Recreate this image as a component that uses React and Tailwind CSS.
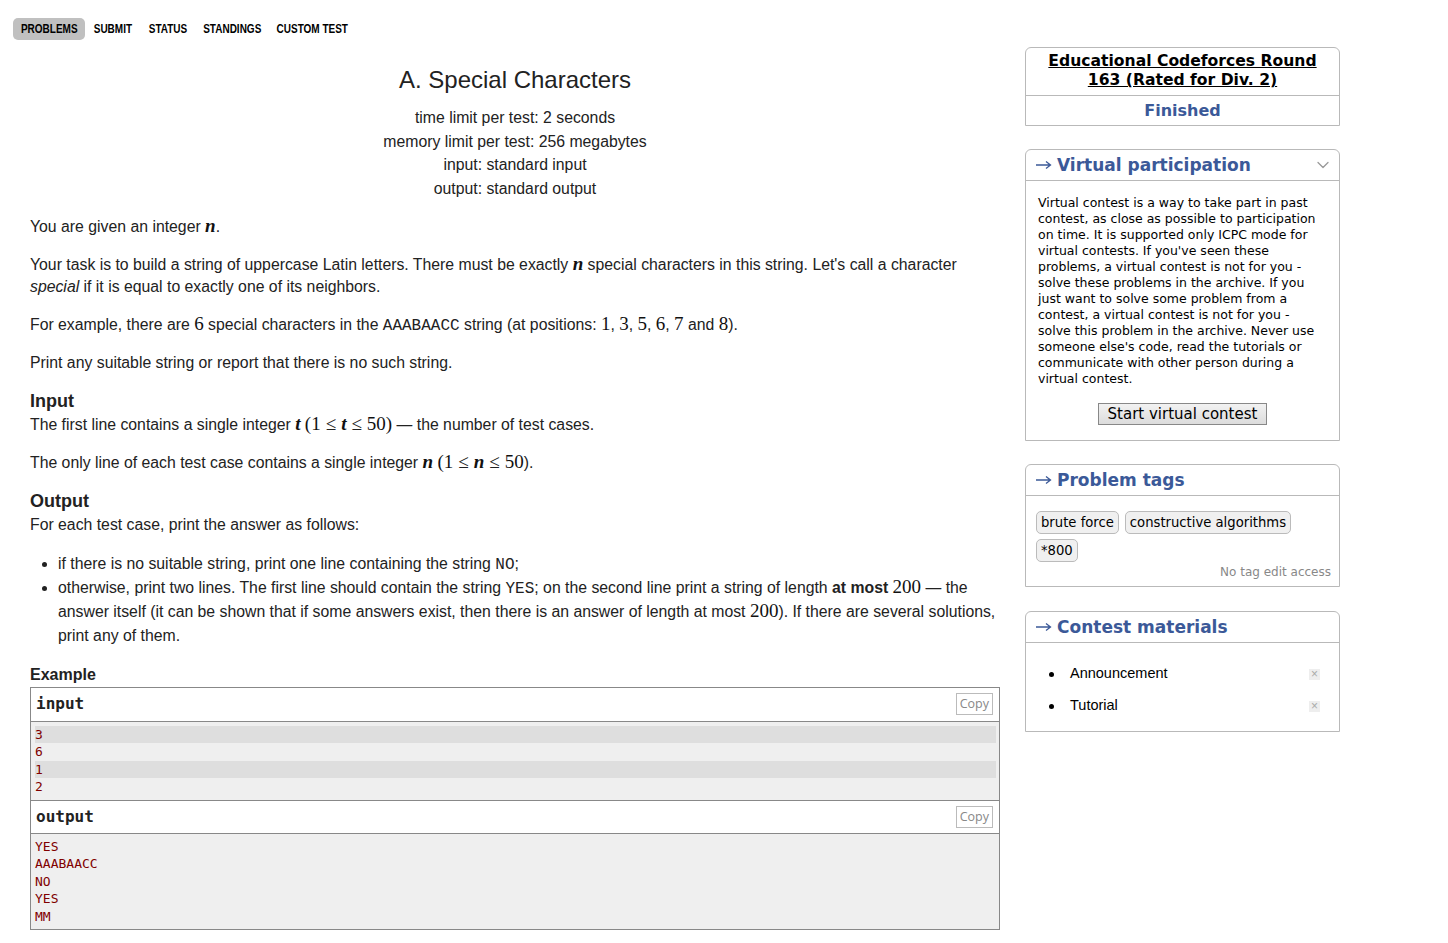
import { FiChevronDown } from "react-icons/fi";

const tabs = [
  { label: "PROBLEMS", w: "w-[54px]", active: true },
  { label: "SUBMIT", w: "w-[38px]" },
  { label: "STATUS", w: "w-[36px]" },
  { label: "STANDINGS", w: "w-[56px]" },
  { label: "CUSTOM TEST", w: "w-[69px]" },
];

const virtualText = [
  "Virtual contest is a way to take part in past",
  "contest, as close as possible to participation",
  "on time. It is supported only ICPC mode for",
  "virtual contests. If you've seen these",
  "problems, a virtual contest is not for you -",
  "solve these problems in the archive. If you",
  "just want to solve some problem from a",
  "contest, a virtual contest is not for you -",
  "solve this problem in the archive. Never use",
  "someone else's code, read the tutorials or",
  "communicate with other person during a",
  "virtual contest.",
];

// math bits, rendered in a serif face like MathJax output
const M = ({ children }) => (
  <span className="font-['Liberation_Serif',serif] text-[19px] leading-none text-[#111]">{children}</span>
);
const V = ({ children }) => (
  <i className="font-['Liberation_Serif',serif] text-[19px] leading-none font-semibold text-[#111]">{children}</i>
);
const Le = () => <span className="mx-[5px] font-['Liberation_Serif',serif] text-[19px] leading-none">≤</span>;
const Tt = ({ children }) => (
  <span className="font-['Liberation_Mono',monospace] text-[16px] leading-none">{children}</span>
);

const Arrow = () => (
  <svg width="17" height="10" viewBox="0 0 17 10" className="mr-[5px] shrink-0">
    <path d="M1 5h14M11 1.5L15.5 5 11 8.5" fill="none" stroke="#3b5998" strokeWidth="1.3" />
  </svg>
);

const SideBox = ({ title, right, className = "", children }) => (
  <div className={`border border-[#b9b9b9] rounded-t-[6px] ${className}`}>
    <div className="h-[31px] flex items-center justify-between border-b border-[#b9b9b9] px-[9px]">
      <div className="flex items-center text-[#3b5998] text-[17px] leading-none font-bold">
        <Arrow />
        {title}
      </div>
      {right}
    </div>
    {children}
  </div>
);

const Copy = () => (
  <span className="border border-[#bbb] text-[#888] text-[12.5px] leading-[20px] px-[3px] font-['Open_Sans',sans-serif]">
    Copy
  </span>
);

export default function App() {
  const input = ["3", "6", "1", "2"];
  const output = ["YES", "AAABAACC", "NO", "YES", "MM"];

  return (
    <div className="min-h-screen bg-white text-[#222] font-['Liberation_Sans',Arial,sans-serif]">
      {/* Tabs */}
      <nav className="h-[47px] flex items-start pl-[13px] pt-[18px]">
        {tabs.map((t) => (
          <span
            key={t.label}
            className={`h-[22px] flex items-center px-[9px] rounded-[5px] ${t.active ? "bg-[#c0c0c0]" : ""}`}
          >
            <span className={`${t.w} flex justify-center`}>
              <span className="scale-x-[0.74] whitespace-nowrap font-bold text-[13.5px] text-black">{t.label}</span>
            </span>
          </span>
        ))}
      </nav>

      <div className="flex items-start">
        {/* Problem statement */}
        <main className="ml-[30px] w-[970px] text-[15.8px]">
          <div className="text-center">
            <h1 className="mt-[17px] text-[24px] leading-8">A. Special Characters</h1>
            <div className="mt-[10px] leading-[23.67px]">
              <div>time limit per test: 2 seconds</div>
              <div>memory limit per test: 256 megabytes</div>
              <div>input: standard input</div>
              <div>output: standard output</div>
            </div>
          </div>

          <div className="mt-[15px] leading-[22px]">
            <p className="mb-4">
              You are given an integer <V>n</V>.
            </p>
            <p className="mb-4">
              Your task is to build a string of uppercase Latin letters. There must be exactly <V>n</V> special
              characters in this string. Let's call a character <i>special</i> if it is equal to exactly one of its
              neighbors.
            </p>
            <p className="mb-4">
              For example, there are <M>6</M> special characters in the <Tt>AAABAACC</Tt> string (at positions:{" "}
              <M>1</M>, <M>3</M>, <M>5</M>, <M>6</M>, <M>7</M> and <M>8</M>).
            </p>
            <p className="mb-4">Print any suitable string or report that there is no such string.</p>

            <h2 className="text-[18px] font-bold leading-[22px] mb-[2px]">Input</h2>
            <p className="mb-4">
              The first line contains a single integer <V>t</V> <M>(1</M>
              <Le />
              <V>t</V>
              <Le />
              <M>50)</M> — the number of test cases.
            </p>
            <p className="mb-4">
              The only line of each test case contains a single integer <V>n</V> <M>(1</M>
              <Le />
              <V>n</V>
              <Le />
              <M>50</M>).
            </p>

            <h2 className="text-[18px] font-bold leading-[22px] mb-[2px]">Output</h2>
            <p className="mb-4">For each test case, print the answer as follows:</p>
            <ul className="mb-4 leading-6 pl-[28px] list-disc">
              <li>
                if there is no suitable string, print one line containing the string <Tt>NO</Tt>;
              </li>
              <li>
                otherwise, print two lines. The first line should contain the string <Tt>YES</Tt>; on the second line
                print a string of length <b>at most</b> <M>200</M> — the answer itself (it can be shown that if some
                answers exist, then there is an answer of length at most <M>200</M>). If there are several solutions,
                print any of them.
              </li>
            </ul>

            <div className="font-bold text-[16px] leading-[22px]">Example</div>
          </div>

          {/* Sample tests */}
          <div className="mt-[1px] border border-[#888] font-['DejaVu_Sans_Mono',monospace]">
            <div className="h-[33px] flex items-center justify-between pl-[5px] pr-[6px]">
              <span className="font-bold text-[16px]">input</span>
              <Copy />
            </div>
            <div className="border-t border-[#888] bg-[#efefef] pl-[4px] pr-[3px] py-[4px]">
              {input.map((line, i) => (
                <div
                  key={i}
                  className={`h-[17.5px] leading-[17.5px] text-[13px] text-[#800000] ${
                    i % 2 === 0 ? "bg-[#dedede]" : ""
                  }`}
                >
                  {line}
                </div>
              ))}
            </div>
            <div className="h-[33px] flex items-center justify-between pl-[5px] pr-[6px] border-t border-[#888]">
              <span className="font-bold text-[16px]">output</span>
              <Copy />
            </div>
            <div className="border-t border-[#888] bg-[#efefef] pl-[4px] pr-[3px] py-[4px]">
              {output.map((line, i) => (
                <div key={i} className="h-[17.5px] leading-[17.5px] text-[13px] text-[#800000]">
                  {line}
                </div>
              ))}
            </div>
          </div>
        </main>

        {/* Sidebar */}
        <aside className="ml-[25px] w-[315px] flex flex-col font-['DejaVu_Sans',Verdana,sans-serif]">
          <div className="border border-[#b9b9b9] rounded-t-[6px]">
            <div className="pt-[4px] pb-[5px] text-center text-[15.6px] leading-[19px] font-bold underline text-black">
              Educational Codeforces Round
              <br />
              163 (Rated for Div. 2)
            </div>
            <div className="h-[30px] flex items-center justify-center border-t border-[#b9b9b9] text-[#3b5998] font-bold text-[16px]">
              Finished
            </div>
          </div>

          <SideBox
            className="mt-[23px]"
            title="Virtual participation"
            right={<FiChevronDown className="text-[#999] text-[20px] -mr-[3px]" strokeWidth={1.5} />}
          >
            <div className="px-[12px] pt-[14px] pb-[15px]">
              <div className="text-[12.5px] leading-4 text-black whitespace-nowrap">
                {virtualText.map((l, i) => (
                  <div key={i}>{l}</div>
                ))}
              </div>
              <div className="mt-[16px] flex justify-center">
                <span className="h-[22px] px-[9px] flex items-center border border-[#888] bg-gradient-to-b from-[#f2f2f2] to-[#dcdcdc] text-[15px] text-black">
                  Start virtual contest
                </span>
              </div>
            </div>
          </SideBox>

          <SideBox className="mt-[23px]" title="Problem tags">
            <div className="pl-[10px] pr-[8px] pt-[15px] pb-[7px]">
              <div className="flex flex-wrap gap-x-[6px] gap-y-[5px]">
                {["brute force", "constructive algorithms", "*800"].map((t) => (
                  <span
                    key={t}
                    className="h-[23px] px-[4px] flex items-center border border-[#bbb] rounded-[5px] bg-[#f0f0f0] text-[13.2px] text-black"
                  >
                    {t}
                  </span>
                ))}
              </div>
              <div className="mt-[3px] text-right text-[12px] leading-[14px] text-[#888]">No tag edit access</div>
            </div>
          </SideBox>

          <SideBox className="mt-[24px]" title="Contest materials">
            <ul className="pt-[15px] pb-[9px] font-['Liberation_Sans',Arial,sans-serif] text-[14.5px]">
              {["Announcement", "Tutorial"].map((m) => (
                <li key={m} className="h-[32px] flex items-center">
                  <span className="ml-[23px] w-[5px] h-[5px] rounded-full bg-black" />
                  <span className="ml-[16px] flex-1 text-black">{m}</span>
                  <span className="mr-[19px] w-[11px] h-[11px] bg-[#eee] text-[#aaa] text-[12px] leading-[11px] flex items-center justify-center">
                    ×
                  </span>
                </li>
              ))}
            </ul>
          </SideBox>
        </aside>
      </div>
    </div>
  );
}
